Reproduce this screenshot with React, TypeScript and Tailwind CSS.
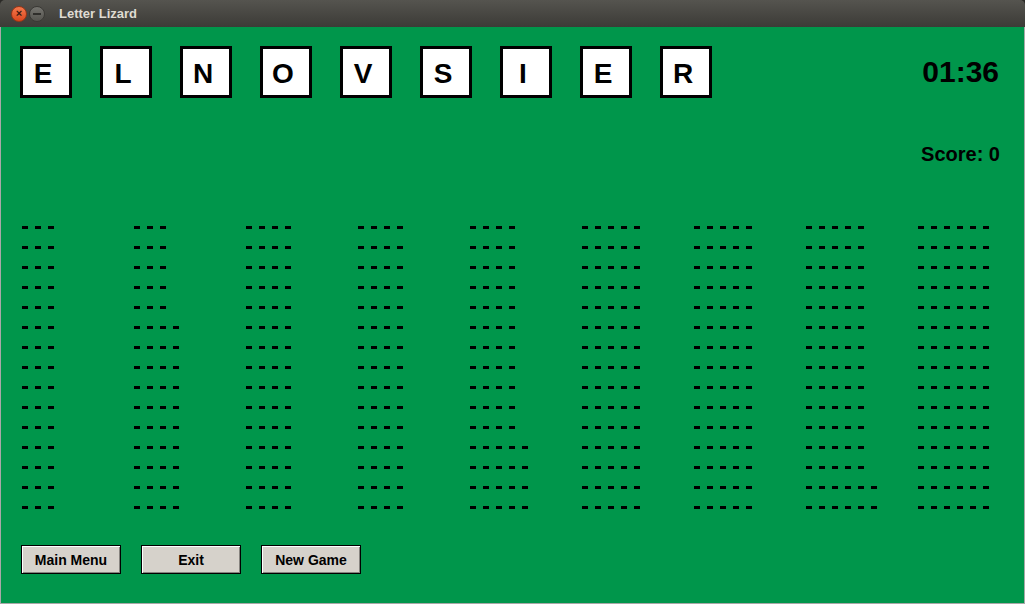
import React from "react";

const letters = ["E", "L", "N", "O", "V", "S", "I", "E", "R"];

const rep = (n: number, v: number) => Array(n).fill(v) as number[];

// dashes per word slot, one array per column
const columns: number[][] = [
  rep(15, 3),
  [...rep(5, 3), ...rep(10, 4)],
  rep(15, 4),
  rep(15, 4),
  [...rep(11, 4), ...rep(4, 5)],
  rep(15, 5),
  rep(15, 5),
  [...rep(13, 5), ...rep(2, 6)],
  rep(15, 6),
];

const Tile = ({ ch }: { ch: string }) => (
  <div className="w-[52px] h-[52px] border-[3px] border-black bg-white flex items-center justify-center pr-[6px] pt-[3px]">
    <span className="text-[28px] font-bold leading-none text-black">{ch}</span>
  </div>
);

const Blank = ({ n }: { n: number }) => (
  <div className="flex gap-[7px] h-[3px]">
    {Array.from({ length: n }).map((_, i) => (
      <div key={i} className="w-[6px] h-[3px] bg-black" />
    ))}
  </div>
);

const Btn = ({ label }: { label: string }) => (
  <button className="w-[100px] h-[29px] border border-black bg-[#d6d2cb] shadow-[inset_1px_1px_0_#ffffff,inset_-1px_-1px_0_#86837e] text-[14px] font-bold text-black leading-none">
    {label}
  </button>
);

const App = () => {
  return (
    <div className="w-[1025px] h-[604px] flex flex-col bg-[#2b2a27] font-['Liberation_Sans',Arial,sans-serif] overflow-hidden">
      {/* title bar */}
      <div className="h-[27px] rounded-t-[5px] bg-gradient-to-b from-[#55544f] to-[#3c3b37] flex items-center pl-[11px]">
        <div className="w-[16px] h-[16px] rounded-full bg-gradient-to-b from-[#f4784c] to-[#d9461c] border border-[#9a3516] flex items-center justify-center text-[#3a1a10] text-[11px] font-bold leading-none">
          ×
        </div>
        <div className="ml-[2px] w-[16px] h-[16px] rounded-full bg-gradient-to-b from-[#75746f] to-[#55544f] border border-[#3a3935] flex items-center justify-center">
          <div className="w-[8px] h-[2px] bg-[#2f2e2b]" />
        </div>
        <span className="ml-[14px] text-[13px] font-bold text-[#dfdbd2] leading-none">Letter Lizard</span>
      </div>

      {/* game area */}
      <div className="flex-1 bg-[#00964b] border-x border-b border-[#a8a8a8] flex flex-col">
        <div className="mt-[19px] flex justify-between">
          <div className="flex gap-[28px] pl-[19px]">
            {letters.map((l, i) => (
              <Tile key={i} ch={l} />
            ))}
          </div>
          <div className="mt-[11px] pr-[25px] text-[30px] font-bold leading-none text-black">01:36</div>
        </div>

        <div className="mt-[46px] flex justify-end pr-[24px]">
          <span className="text-[20px] font-bold leading-none text-black">Score: 0</span>
        </div>

        <div className="mt-[62px] flex pl-[21px]">
          {columns.map((col, ci) => (
            <div key={ci} className="w-[112px] shrink-0 flex flex-col gap-[17px]">
              {col.map((n, ri) => (
                <Blank key={ri} n={n} />
              ))}
            </div>
          ))}
        </div>

        <div className="mt-[36px] flex gap-[20px] pl-[20px]">
          <Btn label="Main Menu" />
          <Btn label="Exit" />
          <Btn label="New Game" />
        </div>
      </div>
    </div>
  );
};

export default App;
